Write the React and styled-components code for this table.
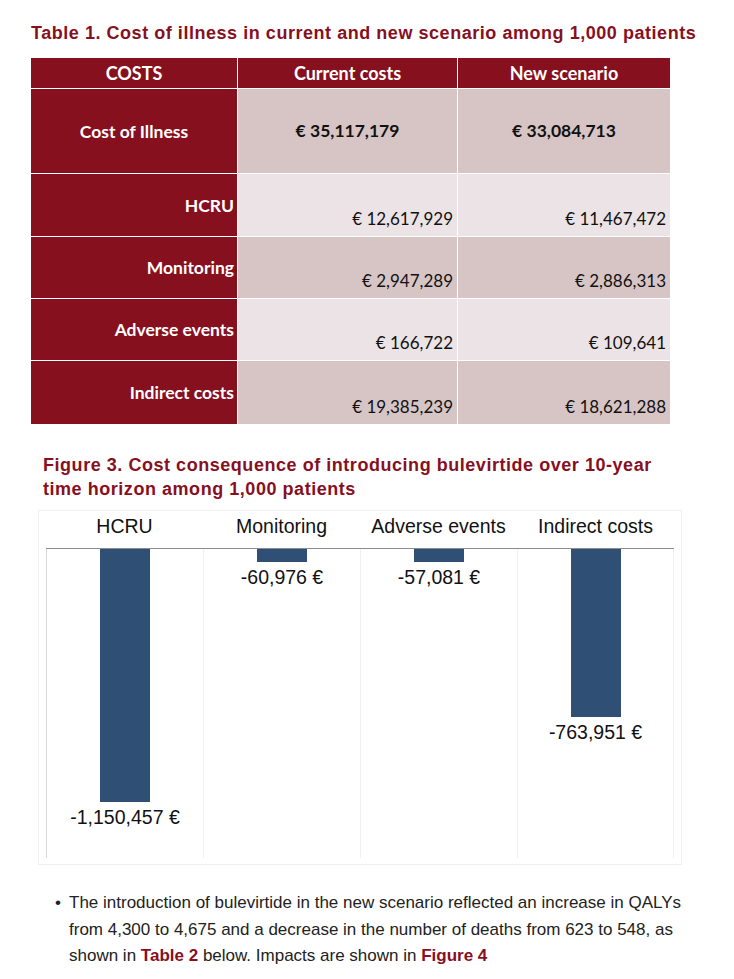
import React from 'react'
import styled, { createGlobalStyle } from 'styled-components'

const Global = createGlobalStyle`
  body {
    margin: 0;
    background: #fff;
    font-family: "Liberation Sans", Arial, sans-serif;
  }
`

const RED = '#87101f'

const Page = styled.div`
  width: 734px;
  padding: 23px 0 20px 31px;
  box-sizing: border-box;
`

const Caption = styled.h2`
  margin: 0;
  color: ${RED};
  font-size: 18px;
  letter-spacing: 0.54px;
  line-height: ${p => p.lh || 20}px;
  font-weight: bold;
  margin-left: ${p => p.indent || 0}px;
  width: ${p => p.w || 'auto'};
`

const Table = styled.div`
  margin-top: 15px;
  width: 639px;
  display: grid;
  grid-template-columns: 206px 219px 1fr;
  grid-template-rows: 30px 84px 62px 61px 61px 63px;
  gap: 1px;
  background: #fff;
  font-family: Lato, "Open Sans", sans-serif;
  font-size: 17px;
`

const Head = styled.div`
  background: ${RED};
  color: #fff;
  font-weight: bold;
  font-size: 18px;
  display: flex;
  align-items: center;
  justify-content: center;
`

const Label = styled.div`
  background: ${RED};
  color: #fff;
  font-weight: bold;
  font-size: 17.5px;
  display: flex;
  align-items: center;
  justify-content: ${p => (p.center ? 'center' : 'flex-end')};
  padding-right: ${p => (p.center ? 0 : 3)}px;
`

const Value = styled.div`
  background: ${p => (p.light ? '#ebe3e5' : '#d7c5c5')};
  color: #111;
  display: flex;
  align-items: ${p => (p.total ? 'center' : 'flex-end')};
  justify-content: ${p => (p.total ? 'center' : 'flex-end')};
  font-weight: ${p => (p.total ? 'bold' : 'normal')};
  font-size: ${p => (p.total ? 17.5 : 17)}px;
  padding: ${p => (p.total ? '0 0 2px' : '0 4px 7px 0')};
`

const Panel = styled.div`
  margin: 9px 0 0 7px;
  width: 644px;
  border: 1px solid #f0f0f0;
  padding: 0 7px 6px 7px;
  box-sizing: border-box;
`

const Cats = styled.div`
  display: grid;
  grid-template-columns: repeat(4, 1fr);
  height: 37px;
  border-bottom: 1px solid #8c8c8c;
`

const Cat = styled.div`
  font-size: 19.5px;
  color: #111;
  text-align: center;
  line-height: 30px;
`

const Plot = styled.div`
  display: grid;
  grid-template-columns: repeat(4, 1fr);
  height: 309px;
`

const Col = styled.div`
  border-left: 1px solid ${p => (p.first ? '#d9d9d9' : '#f0f0f0')};
  border-right: ${p => (p.last ? '1px solid #f0f0f0' : 'none')};
  display: flex;
  flex-direction: column;
  align-items: center;
`

const Bar = styled.div`
  width: 50px;
  background: #304f74;
`

const BarValue = styled.div`
  margin-top: 4px;
  font-size: 19.5px;
  line-height: 22px;
  color: #111;
`

const Bullets = styled.ul`
  margin: 25px 0 0;
  padding: 0 0 0 38px;
  width: 618px;
  font-size: 17px;
  line-height: 26.5px;
  color: #222;
  list-style: none;
`

const Item = styled.li`
  position: relative;
  &:before {
    content: '•';
    position: absolute;
    left: -14px;
  }
`

const Ref = styled.b`
  color: ${RED};
`

const rows = [
  { label: 'HCRU', cur: '€ 12,617,929', nw: '€ 11,467,472', light: true },
  { label: 'Monitoring', cur: '€ 2,947,289', nw: '€ 2,886,313' },
  { label: 'Adverse events', cur: '€ 166,722', nw: '€ 109,641', light: true },
  { label: 'Indirect costs', cur: '€ 19,385,239', nw: '€ 18,621,288' },
]

const chart = [
  { label: 'HCRU', value: -1150457 },
  { label: 'Monitoring', value: -60976 },
  { label: 'Adverse events', value: -57081 },
  { label: 'Indirect costs', value: -763951 },
]

const SCALE = 0.00022

const fmt = v => '-' + Math.abs(v).toLocaleString('en-US') + ' €'

export default function App() {
  return (
    <Page>
      <Global />
      <Caption>Table 1. Cost of illness in current and new scenario among 1,000 patients</Caption>
      <Table>
        <Head>COSTS</Head>
        <Head>Current costs</Head>
        <Head>New scenario</Head>
        <Label center>Cost of Illness</Label>
        <Value total>€ 35,117,179</Value>
        <Value total>€ 33,084,713</Value>
        {rows.map(r => (
          <React.Fragment key={r.label}>
            <Label>{r.label}</Label>
            <Value light={r.light}>{r.cur}</Value>
            <Value light={r.light}>{r.nw}</Value>
          </React.Fragment>
        ))}
      </Table>

      <Caption indent={12} lh={24} style={{ marginTop: 29 }} w="630px">
        Figure 3. Cost consequence of introducing bulevirtide over 10-year time horizon among 1,000 patients
      </Caption>
      <Panel>
        <Cats>
          {chart.map(c => (
            <Cat key={c.label}>{c.label}</Cat>
          ))}
        </Cats>
        <Plot>
          {chart.map((c, i) => (
            <Col key={c.label} first={i === 0} last={i === chart.length - 1}>
              <Bar style={{ height: Math.abs(c.value) * SCALE }} />
              <BarValue>{fmt(c.value)}</BarValue>
            </Col>
          ))}
        </Plot>
      </Panel>

      <Bullets>
        <Item>
          The introduction of bulevirtide in the new scenario reflected an increase in QALYs from 4,300 to
          4,675 and a decrease in the number of deaths from 623 to 548, as shown in <Ref>Table 2</Ref> below.
          Impacts are shown in <Ref>Figure 4</Ref>
        </Item>
      </Bullets>
    </Page>
  )
}
